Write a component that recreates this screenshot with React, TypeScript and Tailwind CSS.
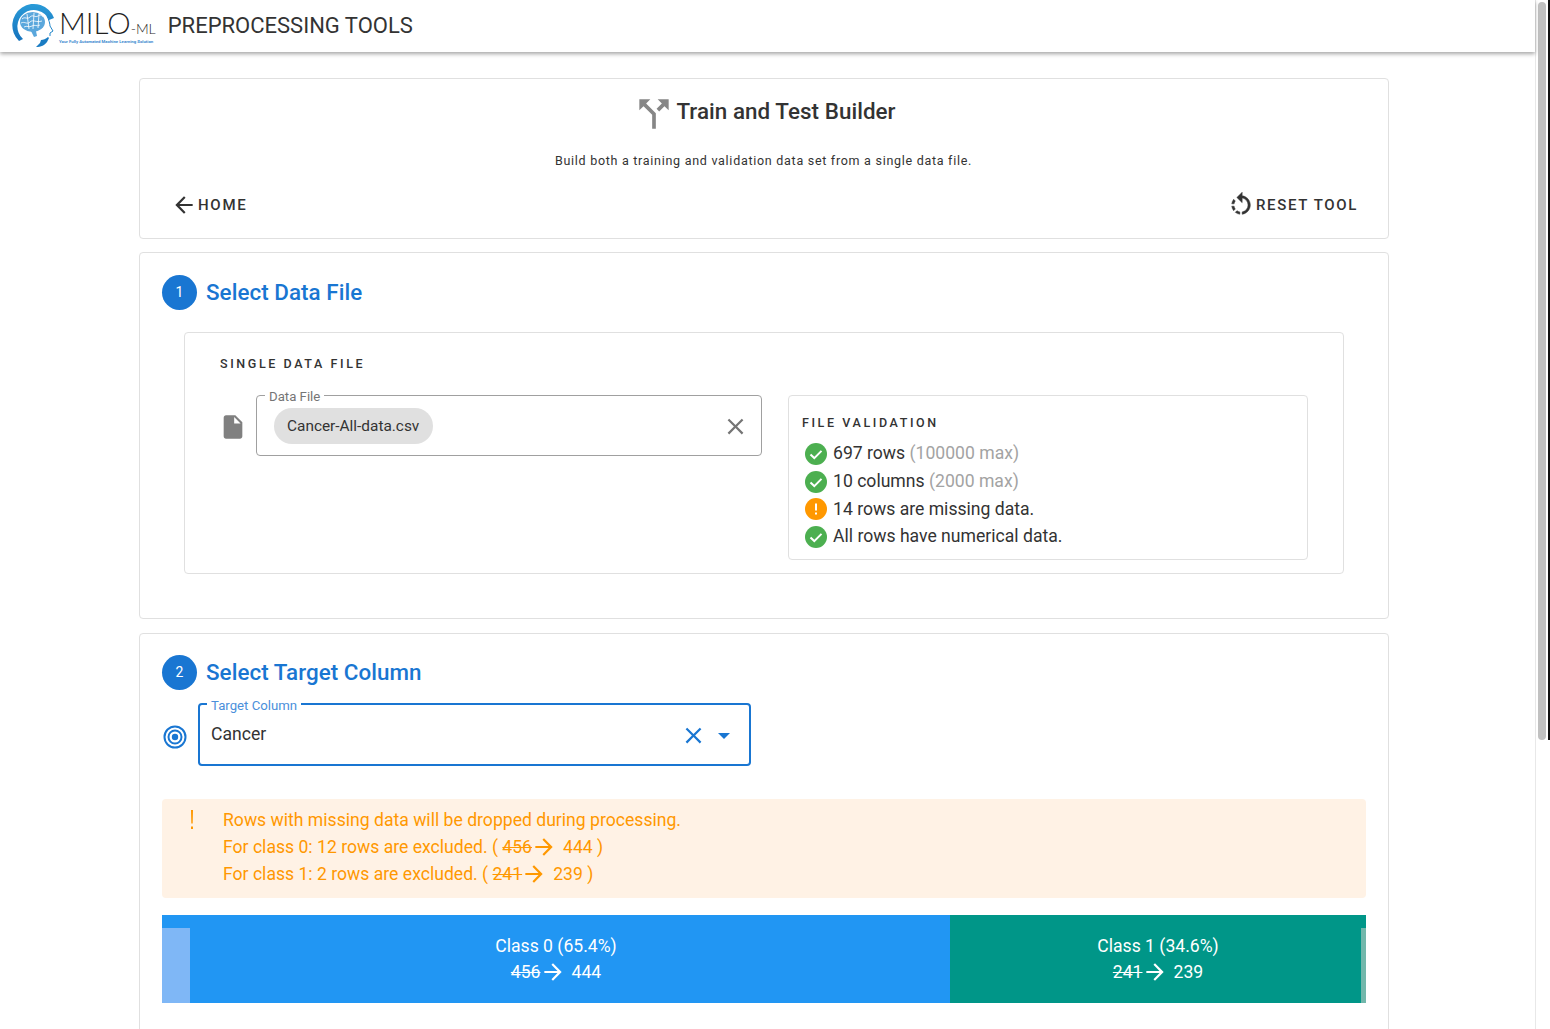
import type { ReactNode } from "react";

const MdPath = ({ d, className }: { d: string; className: string }) => (
  <svg viewBox="0 0 24 24" className={className} fill="currentColor">
    <path d={d} />
  </svg>
);

const ARROW_FORWARD = "M12 4l-1.41 1.41L16.17 11H4v2h12.17l-5.58 5.59L12 20l8-8z";
const ARROW_BACK = "M20 11H7.83l5.59-5.59L12 4l-8 8 8 8 1.41-1.41L7.83 13H20v-2z";
const CLOSE = "M19 6.41 17.59 5 12 10.59 6.41 5 5 6.41 10.59 12 5 17.59 6.41 19 12 13.41 17.59 19 19 17.59 13.41 12z";
const CALL_SPLIT = "M14 4l2.29 2.29-2.88 2.88 1.42 1.42 2.88-2.88L20 10V4zm-4 0H4v6l2.29-2.29 4.71 4.7V20h2v-8.41l-5.29-5.3z";
const ROTATE_LEFT =
  "M7.11 8.53 5.7 7.11C4.8 8.27 4.24 9.61 4.07 11h2.02c.14-.87.49-1.72 1.02-2.47zM6.09 13H4.07c.17 1.39.72 2.73 1.62 3.89l1.41-1.42c-.52-.75-.87-1.59-1.01-2.47zm1.01 5.32c1.16.9 2.51 1.44 3.9 1.61V17.9c-.87-.15-1.71-.49-2.46-1.03L7.1 18.32zM13 4.07V1L8.45 5.55 13 10V6.09c2.84.48 5 2.94 5 5.91s-2.16 5.43-5 5.91v2.02c3.95-.49 7-3.85 7-7.93s-3.05-7.44-7-7.93z";
const FILE = "M6 2c-1.1 0-1.99.9-1.99 2L4 20c0 1.1.89 2 1.99 2H18c1.1 0 2-.9 2-2V8l-6-6H6zm7 7V3.5L18.5 9H13z";

function Logo() {
  return (
    <div className="flex items-start">
      <svg viewBox="0 0 48 48" className="w-[48px] h-[48px] ml-[9px] mt-[2px] shrink-0">
        <defs>
          <linearGradient id="ring" x1="0" y1="0" x2="0" y2="1">
            <stop offset="0" stopColor="#2a9bd8" />
            <stop offset="1" stopColor="#1673bd" />
          </linearGradient>
        </defs>
        <path d="M10 39A21.5 21.5 0 1 1 45 16L40 18A16.5 16.5 0 1 0 14 37Z" fill="url(#ring)" />
        <path d="M27 45c5 0 9-2 11-5l2-4-1-1c-2 2-5 3-7 3l-1 3z" fill="#1a7cc3" />
        <path d="M38 14c2 4 3 8 3 10l3 5-3 2v3" fill="none" stroke="#2186c9" strokeWidth="1" />
        <ellipse cx="23.5" cy="20" rx="12.5" ry="10" fill="#5aa7dc" />
        <path
          d="M13 17c3-3 5 1 8-2s5 1 8-1 4 0 5 1M12 21c4-2 6 2 9-1s6 1 12-1M15 25c3-2 5 1 8-1s4 1 8-1M18 12l2 15M25 11l-1 16M30 12l-1 14"
          fill="none"
          stroke="#ffffff"
          strokeWidth="0.8"
        />
        <path d="M22 29l3 6 3-1-1-5z" fill="#5aa7dc" />
      </svg>
      <div className="flex flex-col ml-[2px]">
        <div className="flex items-baseline h-[39px] pt-[8px] font-['Lato',sans-serif] font-light text-[#1f1f1f] leading-none">
          <span className="text-[29.6px]">MILO</span>
          <span className="text-[14px]">-ML</span>
        </div>
        <span className="text-[4.3px] leading-[5px] font-bold text-[#3d8bd0] whitespace-nowrap">
          Your Fully Automated Machine Learning Solution
        </span>
      </div>
    </div>
  );
}

function Card({ children, className }: { children: ReactNode; className: string }) {
  return <section className={`border border-[#e0e0e0] rounded-[4px] bg-white ${className}`}>{children}</section>;
}

function StepHeading({ n, title }: { n: number; title: string }) {
  return (
    <div className="flex items-center gap-[9px]">
      <div className="w-[35px] h-[35px] rounded-full bg-[#1976d2] text-white text-[14px] flex items-center justify-center">
        {n}
      </div>
      <h2 className="text-[22.4px] font-medium text-[#1976d2] leading-[35px] tracking-[0.05px]">{title}</h2>
    </div>
  );
}

function StatusIcon({ warn }: { warn?: boolean }) {
  return (
    <svg viewBox="0 0 22 22" className="w-[22px] h-[22px] shrink-0">
      <circle cx="11" cy="11" r="11" fill={warn ? "#ff9800" : "#4caf50"} />
      {warn ? (
        <path d="M10 5.5h2v7h-2zM10 14.5h2v2h-2z" fill="#fff" />
      ) : (
        <path d="M5.5 11.5l3.8 3.6 7.2-7.2" fill="none" stroke="#fff" strokeWidth="2" />
      )}
    </svg>
  );
}

function ValidationRow({ warn, text, muted }: { warn?: boolean; text: string; muted?: string }) {
  return (
    <div className="flex items-center h-[27.7px] pl-[3px] gap-[6px] text-[17.6px] text-[#333333] whitespace-nowrap">
      <StatusIcon warn={warn} />
      <span className="-mt-[1px]">
        {text}
        {muted && <span className="text-[#a3a3a3]"> {muted}</span>}
      </span>
    </div>
  );
}

function Change({ from, to }: { from: number; to: number }) {
  return (
    <>
      <span className="line-through">{from}</span>
      <MdPath d={ARROW_FORWARD} className="inline-block w-[26px] h-[26px] align-[-7px] -ml-[1px] mr-[6px]" />
      {to}
    </>
  );
}

export default function App() {
  return (
    <div className="flex h-[1029px] w-[1550px] overflow-hidden bg-white font-['Roboto',sans-serif] text-[#333333]">
      <div className="w-[1535px] shrink-0">
        <header className="flex items-start h-[52px] bg-white shadow-[0_2px_4px_rgba(0,0,0,0.35)] relative">
          <Logo />
          <h1 className="ml-[12px] mt-[10px] text-[22px] leading-[32px] text-[#333333] whitespace-nowrap">
            PREPROCESSING TOOLS
          </h1>
        </header>

        <main className="w-[1250px] ml-[139px] mt-[26px] flex flex-col">
          <Card className="h-[161px] flex flex-col">
            <div className="flex items-center justify-center mt-[14px] h-[36px]">
              <MdPath d={CALL_SPLIT} className="w-[44px] h-[44px] text-[#868686] -my-[4px] mt-[2px]" />
              <span className="text-[22.4px] font-medium leading-none tracking-[0.05px]">Train and Test Builder</span>
            </div>
            <p className="text-center text-[12.5px] tracking-[0.72px] leading-[18px] mt-[23px] -ml-[1px]">
              Build both a training and validation data set from a single data file.
            </p>
            <div className="flex justify-between items-center mt-[21px] pl-[31px] pr-[30px]">
              <div className="flex items-center text-[15px] font-medium tracking-[1.7px]">
                <MdPath d={ARROW_BACK} className="w-[26px] h-[26px] mr-[1px]" />
                HOME
              </div>
              <div className="flex items-center text-[15px] font-medium tracking-[1.65px]">
                <MdPath d={ROTATE_LEFT} className="w-[28px] h-[28px] mr-[1px] stroke-current stroke-[0.4]" />
                RESET TOOL
              </div>
            </div>
          </Card>

          <Card className="h-[367px] mt-[13px] pt-[22px] px-[22px]">
            <StepHeading n={1} title="Select Data File" />
            <div className="mt-[22px] ml-[22px] w-[1160px] h-[242px] border border-[#e0e0e0] rounded-[4px] px-[35px] pt-[22px]">
              <h3 className="text-[12.5px] font-medium tracking-[2.6px] leading-[18px]">SINGLE DATA FILE</h3>
              <div className="flex mt-[22px]">
                <div className="flex items-start w-[568px] shrink-0">
                  <MdPath d={FILE} className="w-[28px] h-[28px] text-[#808080] -ml-[1px] mt-[18px] mr-[9px] shrink-0" />
                  <fieldset className="relative w-[506px] h-[67px] -mt-[6px] border border-[#a0a0a0] rounded-[4px] px-[8px]">
                    <legend className="px-[4px] text-[13.2px] leading-[12px] text-[#757575] translate-y-[1.5px]">Data File</legend>
                    <div className="flex items-center justify-between h-[36px] mt-[7px] pl-[9px] pr-[4px]">
                      <span className="bg-[#e0e0e0] rounded-full h-[36px] pl-[13px] pr-[14px] pt-[1px] flex items-center text-[15.4px]">
                        Cancer-All-data.csv
                      </span>
                      <MdPath d={CLOSE} className="w-[27px] h-[27px] text-[#757575]" />
                    </div>
                  </fieldset>
                </div>
                <div className="w-[520px] h-[165px] border border-[#e0e0e0] rounded-[4px] pl-[13px] pt-[19px]">
                  <h3 className="text-[12.5px] font-medium tracking-[2.6px] leading-[16px] mb-[9px]">FILE VALIDATION</h3>
                  <ValidationRow text="697 rows" muted="(100000 max)" />
                  <ValidationRow text="10 columns" muted="(2000 max)" />
                  <ValidationRow warn text="14 rows are missing data." />
                  <ValidationRow text="All rows have numerical data." />
                </div>
              </div>
            </div>
          </Card>

          <Card className="h-[420px] mt-[14px] pt-[21px] px-[22px]">
            <StepHeading n={2} title="Select Target Column" />
            <div className="flex items-center mt-[8px]">
              <svg viewBox="0 0 26 26" className="w-[26px] h-[26px] mt-[10px] shrink-0 text-[#1976d2]" fill="none" stroke="currentColor">
                <circle cx="13" cy="13" r="10.5" strokeWidth="2" />
                <circle cx="13" cy="13" r="6.5" strokeWidth="2" />
                <circle cx="13" cy="13" r="3.2" fill="currentColor" stroke="none" />
              </svg>
              <fieldset className="w-[553px] h-[68px] ml-[10px] border-2 border-[#1976d2] rounded-[4px] pl-[7px] pr-[19px]">
                <legend className="px-[4px] text-[13.2px] leading-[12px] text-[#4a8fdb] translate-y-[1.5px]">Target Column</legend>
                <div className="flex items-center h-[51px] pl-[4px] text-[17.6px]">
                  <span className="flex-1 -mt-[2px]">Cancer</span>
                  <MdPath d={CLOSE} className="w-[27px] h-[27px] text-[#1976d2] mr-[11px]" />
                  <svg viewBox="0 0 12 6" className="w-[12px] h-[6px] text-[#1976d2]" fill="currentColor">
                    <path d="M0 0h12L6 6z" />
                  </svg>
                </div>
              </fieldset>
            </div>

            <div className="flex mt-[33px] w-[1204px] h-[99px] rounded-[4px] bg-[#fff2e5] text-[#ff9800] text-[17.6px] leading-[27px] pt-[8px]">
              <svg viewBox="0 0 4 20" className="w-[4px] h-[20px] ml-[28px] mt-[3px] shrink-0" fill="currentColor">
                <path d="M1 0h2l-.3 13.5H1.3zM1 16.5h2V19H1z" />
              </svg>
              <div className="ml-[29px]">
                <div className="h-[27px]">Rows with missing data will be dropped during processing.</div>
                <div className="h-[27px]">
                  For class 0: 12 rows are excluded. ( <Change from={456} to={444} /> )
                </div>
                <div className="h-[27px]">
                  For class 1: 2 rows are excluded. ( <Change from={241} to={239} /> )
                </div>
              </div>
            </div>

            <div className="flex mt-[17px] w-[1204px] h-[88px] text-white text-[17.6px] leading-[26px]">
              <div className="relative w-[788px] bg-[#2196f3] text-center pt-[18px]">
                <div className="absolute left-0 bottom-0 w-[28px] h-[75px] bg-[#7fb7f6]" />
                <div className="h-[26px]">Class 0 (65.4%)</div>
                <div className="h-[26px]">
                  <Change from={456} to={444} />
                </div>
              </div>
              <div className="relative flex-1 bg-[#009688] text-center pt-[18px]">
                <div className="absolute right-0 bottom-0 w-[5px] h-[75px] bg-[#72b7ab]" />
                <div className="h-[26px]">Class 1 (34.6%)</div>
                <div className="h-[26px]">
                  <Change from={241} to={239} />
                </div>
              </div>
            </div>
          </Card>
        </main>
      </div>

      <aside className="flex w-[15px] border-l border-[#e8e8e8] bg-white">
        <div className="w-[8px] h-[738px] mt-[2px] ml-[2px] rounded-full bg-[#c1c1c1]" />
        <div className="w-[2px] h-[740px] ml-[2px] bg-[#111111]" />
      </aside>
    </div>
  );
}
